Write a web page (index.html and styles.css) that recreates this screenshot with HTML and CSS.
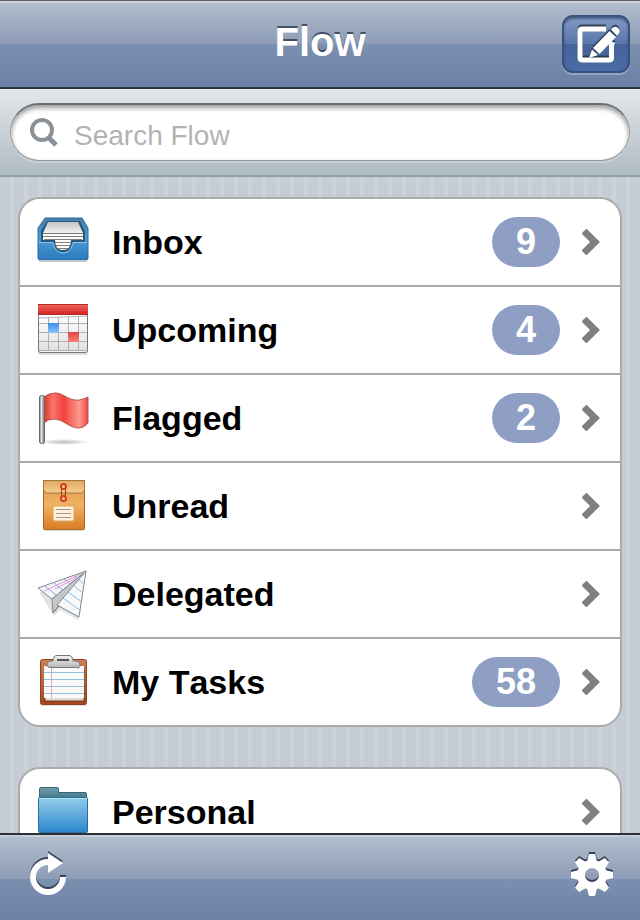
FILE: index.html
```
<!DOCTYPE html>
<html lang="en">
<head>
    <meta charset="UTF-8">
    <meta name="viewport" content="width=device-width, initial-scale=1.0">
    <title>Flow</title>
    <link rel="stylesheet" href="styles.css">
</head>
<body>
    <header class="navbar">
        <h1>Flow</h1>
        <button class="compose" aria-label="New task">
            <svg class="glyph" width="48" height="46" viewBox="0 0 48 46">
                <path d="M34 8H10.500Q8 8 8 10.500V36.500Q8 39 10.500 39H37Q39.500 39 39.500 36.500V24L41 21" fill="none" stroke="#fff" stroke-width="5"/>
                <path d="M17 37L20 28.500 26 34Z" fill="#fff"/>
                <path d="M21 27L37.500 10 44 16 27.500 33Z" fill="#fff"/>
                <path d="M39 8.500L41 6.500Q43.500 5 46 7T47 12L45 14.500Z" fill="#fff"/>
                <path d="M20.500 27.500L27 33.500M38 9.500L44.500 15.500" stroke="#33496f" stroke-width="1"/>
            </svg>
        </button>
    </header>

    <form class="search" role="search">
        <label class="search-field">
            <svg width="32" height="32" viewBox="0 0 32 32">
                <circle cx="14" cy="13" r="10" fill="none" stroke="#8b9199" stroke-width="4"/>
                <path d="M20 20L28 28" stroke="#8b9199" stroke-width="5"/>
            </svg>
            <input type="search" placeholder="Search Flow" aria-label="Search Flow">
        </label>
    </form>

    <main>
        <ul class="list">
            <li>
                <a href="#inbox">
                    <svg class="icon" viewBox="0 0 52 52">
                        <defs>
                            <linearGradient id="tray" x2="0" y2="1">
                                <stop offset="0" stop-color="#477ea9"/>
                                <stop offset=".5" stop-color="#4b9bd5"/>
                                <stop offset="1" stop-color="#2a7abd"/>
                            </linearGradient>
                            <linearGradient id="sheet" x2="0" y2="1">
                                <stop offset="0" stop-color="#c4c4c4"/>
                                <stop offset=".5" stop-color="#fff"/>
                            </linearGradient>
                        </defs>
                        <path d="M8 2H45L51 12V42Q51 44 49 44H3Q1 44 1 42V12Z" fill="url(#tray)" stroke="#2b6a9e"/>
                        <path d="M10 5H43L48 15V26H36Q34 36 26 36T16 26H4V15Z" fill="#28577b"/>
                        <path d="M11 6H41L46 17V24H34Q34 34 26 34T18 24H6V17Z" fill="url(#sheet)"/>
                        <path d="M6 17.500H46M6 20.500H46M7 23.500H45M18 26.500H34M19 29.500H33M21 32.500H31" stroke="#817d78"/>
                        <path d="M2 26.500H16Q18 37 26 37T36 26.500H50" fill="none" stroke="#8dc5ea"/>
                        <path d="M2 45H50" stroke="#c2c7cb" stroke-width="2"/>
                    </svg>
                    <span class="name">Inbox</span>
                    <span class="badge">9</span>
                    <svg class="chevron" viewBox="0 0 18 26"><path d="M2 2L13 13 2 24"/></svg>
                </a>
            </li>
            <li>
                <a href="#upcoming">
                    <svg class="icon" viewBox="0 0 52 52">
                        <defs>
                            <linearGradient id="redbar" x2="0" y2="1">
                                <stop offset="0" stop-color="#f2695e"/>
                                <stop offset="1" stop-color="#cf2020"/>
                            </linearGradient>
                            <linearGradient id="page" x2="0" y2="1">
                                <stop offset="0" stop-color="#fff"/>
                                <stop offset="1" stop-color="#e2e2e2"/>
                            </linearGradient>
                            <linearGradient id="blueday" x2="0" y2="1">
                                <stop offset="0" stop-color="#3b8ee6"/>
                                <stop offset="1" stop-color="#8ac4fb"/>
                            </linearGradient>
                            <linearGradient id="redday" x2="0" y2="1">
                                <stop offset="0" stop-color="#e04444"/>
                                <stop offset="1" stop-color="#fb8078"/>
                            </linearGradient>
                        </defs>
                        <rect x="1" y="4" width="50" height="47" rx="2" fill="#ddd"/>
                        <rect x="1.500" y="3.500" width="49" height="45" rx="2" fill="#f5f5f5" stroke="#777"/>
                        <rect x="2" y="10" width="48" height="36" fill="url(#page)"/>
                        <path d="M11.500 13V46M21.500 13V46M31.500 13V46M41.500 13V46M2 19.500H50M2 28.500H50M2 37.500H50M2 46.500H50" stroke="#b0b0b0"/>
                        <rect x="11" y="19" width="11" height="10" fill="url(#blueday)"/>
                        <rect x="31" y="28" width="11" height="10" fill="url(#redday)"/>
                        <path d="M2 14L50 12" stroke="#b5b5b5"/>
                        <rect x="1" width="50" height="11" rx="1" fill="url(#redbar)"/>
                        <path d="M1 .500H51M1 10.500H51" stroke="#b02a2a"/>
                    </svg>
                    <span class="name">Upcoming</span>
                    <span class="badge">4</span>
                    <svg class="chevron" viewBox="0 0 18 26"><path d="M2 2L13 13 2 24"/></svg>
                </a>
            </li>
            <li>
                <a href="#flagged">
                    <svg class="icon" viewBox="0 0 52 52">
                        <defs>
                            <linearGradient id="cloth">
                                <stop offset="0" stop-color="#e0332c"/>
                                <stop offset=".2" stop-color="#fb756b"/>
                                <stop offset=".45" stop-color="#f0433b"/>
                                <stop offset=".8" stop-color="#ff9a8f"/>
                                <stop offset="1" stop-color="#ea4a42"/>
                            </linearGradient>
                            <linearGradient id="pole">
                                <stop offset="0" stop-color="#777"/>
                                <stop offset=".4" stop-color="#e6e6e6"/>
                                <stop offset="1" stop-color="#666"/>
                            </linearGradient>
                            <radialGradient id="shade">
                                <stop offset="0" stop-color="#bbb"/>
                                <stop offset="1" stop-color="#bbb" stop-opacity="0"/>
                            </radialGradient>
                        </defs>
                        <ellipse cx="27" cy="50" rx="25" ry="3" fill="url(#shade)"/>
                        <path d="M7 5Q12 1 18 1C29 1 34 14 51 5V31Q47 36 42 36C32 36 26 27 17 27Q11 27 7 31Z" fill="url(#cloth)" stroke="#b6504b"/>
                        <rect x="2.500" y="3.500" width="5" height="48" rx="2" fill="url(#pole)" stroke="#666"/>
                    </svg>
                    <span class="name">Flagged</span>
                    <span class="badge">2</span>
                    <svg class="chevron" viewBox="0 0 18 26"><path d="M2 2L13 13 2 24"/></svg>
                </a>
            </li>
            <li>
                <a href="#unread">
                    <svg class="icon" viewBox="0 0 52 52">
                        <defs>
                            <linearGradient id="envelope" x2="0" y2="1">
                                <stop offset="0" stop-color="#d99743"/>
                                <stop offset=".5" stop-color="#f1b264"/>
                                <stop offset="1" stop-color="#d87d24"/>
                            </linearGradient>
                            <linearGradient id="flap" x2="0" y2="1">
                                <stop offset="0" stop-color="#dfa75c"/>
                                <stop offset="1" stop-color="#f7cf91"/>
                            </linearGradient>
                        </defs>
                        <rect x="6" y="45" width="42" height="6" rx="2" fill="#ddd"/>
                        <rect x="6.500" y=".500" width="41" height="49" rx="1" fill="url(#envelope)" stroke="#a96a2a"/>
                        <path d="M6.500 .500H47.500V10L45 13H9L6.500 10Z" fill="url(#flap)" stroke="#a8763c"/>
                        <path d="M24.500 8V18M28.500 8V18" stroke="#a03a1c" stroke-width="1"/>
                        <circle cx="26.500" cy="6.500" r="2.500" fill="#f3c9a0" stroke="#cf3f1d" stroke-width="2"/>
                        <circle cx="26.500" cy="18.500" r="2.500" fill="#f3c9a0" stroke="#cf3f1d" stroke-width="2"/>
                        <rect x="16" y="26" width="21" height="15" rx="2" fill="#fdf1dc" stroke="#dca45e"/>
                        <path d="M19 29.500H34M19 33.500H34M19 37.500H34" stroke="#a89a86"/>
                    </svg>
                    <span class="name">Unread</span>
                    <svg class="chevron" viewBox="0 0 18 26"><path d="M2 2L13 13 2 24"/></svg>
                </a>
            </li>
            <li>
                <a href="#delegated">
                    <svg class="icon" viewBox="0 0 52 52">
                        <path d="M2 24L17 48 23 42 41 52 47 20Z" fill="#e2e2e2"/>
                        <path d="M49 3L1 20 15 31Z" fill="#f4f5f7" stroke="#888"/>
                        <path d="M49 3L15 31 16 45Z" fill="#c3c8cd" stroke="#888"/>
                        <path d="M49 3L16 45 22 38Z" fill="#aeb5bb"/>
                        <path d="M49 3L20 37 42 49Z" fill="#f6f8fa" stroke="#888"/>
                        <path d="M8 18L19 27M17 15L26 22M27 11L33 16M37 8L40 11" stroke="#9c9cdc" stroke-width="1"/>
                        <path d="M7 23L48 4M18 21L41 9" stroke="#e59add" stroke-width="1"/>
                        <path d="M26 30L44 43M31 24L45 34M37 18L46 25M42 12L47 16" stroke="#86bde8" stroke-width="1"/>
                        <path d="M16 45L22 38" fill="none" stroke="#777"/>
                    </svg>
                    <span class="name">Delegated</span>
                    <svg class="chevron" viewBox="0 0 18 26"><path d="M2 2L13 13 2 24"/></svg>
                </a>
            </li>
            <li>
                <a href="#tasks">
                    <svg class="icon" viewBox="0 0 52 52">
                        <defs>
                            <linearGradient id="board" x2="0" y2="1">
                                <stop offset="0" stop-color="#c98250"/>
                                <stop offset="1" stop-color="#a6441b"/>
                            </linearGradient>
                            <linearGradient id="clip" x2="0" y2="1">
                                <stop offset="0" stop-color="#f2f2f2"/>
                                <stop offset="1" stop-color="#b5b5b5"/>
                            </linearGradient>
                        </defs>
                        <rect x="3" y="46" width="47" height="4" rx="2" fill="#dcdcdc"/>
                        <rect x="3.500" y="3.500" width="46" height="45" rx="2" fill="url(#board)" stroke="#8a4524"/>
                        <rect x="8" y="12" width="39" height="33" fill="#ddd" stroke="#74371d"/>
                        <rect x="7" y="10" width="40" height="32" fill="#fafafa"/>
                        <path d="M7 16.500H47M7 23.500H47M7 30.500H47M7 37.500H47" stroke="#8ec1df"/>
                        <path d="M14.500 11V42" stroke="#e8a2bd"/>
                        <path d="M10 9Q10 5 15 5H16Q16 -.500 20 -.500H32Q36 -.500 36 5H38Q43 5 43 9T39 11.500H14Q10 11.500 10 9Z" fill="url(#clip)" stroke="#777"/>
                        <rect x="20" y="3" width="12" height="2" fill="#555"/>
                    </svg>
                    <span class="name">My Tasks</span>
                    <span class="badge">58</span>
                    <svg class="chevron" viewBox="0 0 18 26"><path d="M2 2L13 13 2 24"/></svg>
                </a>
            </li>
        </ul>

        <ul class="list">
            <li>
                <a href="#personal">
                    <svg class="icon" viewBox="0 0 52 52">
                        <defs>
                            <linearGradient id="folder" x2="0" y2="1">
                                <stop offset="0" stop-color="#92cdea"/>
                                <stop offset="1" stop-color="#2b86cc"/>
                            </linearGradient>
                            <linearGradient id="folderback" x2="0" y2="1">
                                <stop offset="0" stop-color="#6fa0ad"/>
                                <stop offset="1" stop-color="#417486"/>
                            </linearGradient>
                        </defs>
                        <path d="M2.500 13V3Q2.500 1.500 4 1.500H20Q21.500 1.500 21.500 3V6.500H48Q49.500 6.500 49.500 8V13Z" fill="url(#folderback)" stroke="#366577"/>
                        <rect x="1.500" y="11.500" width="49" height="35" rx="1" fill="url(#folder)" stroke="#2e6f98"/>
                        <path d="M2 12.500H50" stroke="#b8e2f5"/>
                    </svg>
                    <span class="name">Personal</span>
                    <svg class="chevron" viewBox="0 0 18 26"><path d="M2 2L13 13 2 24"/></svg>
                </a>
            </li>
        </ul>
    </main>

    <footer class="toolbar">
        <button aria-label="Refresh">
            <svg class="glyph" width="52" height="52" viewBox="0 0 52 52">
                <path d="M41 25A15 15 0 1 1 26 10" fill="none" stroke="#fff" stroke-width="6"/>
                <path d="M26 1L41 11 26 21Z" fill="#fff"/>
            </svg>
        </button>
        <button aria-label="Settings">
            <svg class="glyph" width="52" height="52" viewBox="0 0 52 52">
                <defs>
                    <path id="teeth" d="M23 2H29L31 10V36L29 44H23L21 36V10Z"/>
                    <mask id="hub">
                        <rect width="52" height="52" fill="#fff"/>
                        <circle cx="26" cy="23" r="7" fill="#000"/>
                    </mask>
                </defs>
                <g fill="#fff" mask="url(#hub)">
                    <circle cx="26" cy="23" r="15"/>
                    <use href="#teeth"/>
                    <use href="#teeth" transform="rotate(45 26 23)"/>
                    <use href="#teeth" transform="rotate(90 26 23)"/>
                    <use href="#teeth" transform="rotate(135 26 23)"/>
                </g>
            </svg>
        </button>
    </footer>
</body>
</html>
```
FILE: styles.css
```
* {
    box-sizing: border-box;
}
body {
    display: flex;
    flex-direction: column;
    height: 100vh;
    margin: 0;
    font-family: "Liberation Sans", Arial, sans-serif;
    font-kerning: none;
    background-color: #c5ccd4;
    color: #000;
}
button {
    padding: 0;
    border: none;
    background: none;
    cursor: pointer;
}
svg {
    display: block;
    flex: none;
}
.glyph {
    filter: drop-shadow(0 -2px 0 rgba(40, 50, 68, 0.85));
}

/* top bar */
.navbar {
    display: grid;
    grid-template-columns: 1fr auto 1fr;
    align-items: center;
    flex: none;
    height: 89px;
    padding: 0 10px;
    border-top: 1px solid #5d5f6c;
    border-bottom: 2px solid #2d3545;
    background: linear-gradient(#b4bfcf, #8d9cb6 50%, #7b8fb0 50%, #6c81a5);
    box-shadow: inset 0 2px 0 #cdd3dd;
}
.navbar h1 {
    grid-column: 2;
    margin: 0;
    padding-bottom: 4px;
    color: #fff;
    font-size: 40px;
    line-height: 48px;
    text-shadow: 0 -2px 0 rgba(40, 50, 68, 0.75);
}
.compose {
    display: flex;
    align-items: center;
    justify-content: center;
    justify-self: end;
    width: 68px;
    height: 58px;
    border: 2px solid #38527f;
    border-radius: 11px;
    background: linear-gradient(#8299c2, #5876ac 50%, #456399 50%, #4a6ca6);
    box-shadow: inset 0 2px 2px rgba(30, 45, 80, 0.5), 0 2px 0 rgba(255, 255, 255, 0.25);
}

/* search */
.search {
    flex: none;
    height: 88px;
    padding: 14px 10px;
    border-bottom: 2px solid #919ca5;
    background: linear-gradient(#e3e7ea, #afbbc3);
}
.search-field {
    display: flex;
    align-items: center;
    gap: 14px;
    height: 58px;
    padding: 0 17px;
    border: 1px solid #8f9599;
    border-top: 2px solid #6a6d70;
    border-radius: 29px;
    background-color: #fff;
    box-shadow: inset 0 3px 5px rgba(0, 0, 0, 0.4), 0 2px 0 rgba(255, 255, 255, 0.25);
}
.search-field input {
    flex: 1;
    min-width: 0;
    padding: 6px 0 0;
    border: none;
    outline: none;
    background: none;
    font-family: inherit;
    font-size: 28px;
}
.search-field input::placeholder {
    color: #b3b3b3;
}

/* lists */
main {
    flex: 1;
    min-height: 0;
    overflow: hidden;
    padding: 20px 18px;
    background: repeating-linear-gradient(90deg, #c5ccd4 0, #c5ccd4 10px, #cbd2d8 10px, #cbd2d8 14px);
}
.list {
    margin: 0 0 40px;
    padding: 0;
    list-style: none;
    border: 2px solid #a9abad;
    border-radius: 22px;
    background-color: #fff;
}
.list li + li {
    border-top: 2px solid #a9abad;
}
.list a {
    display: flex;
    align-items: center;
    gap: 22px;
    height: 86px;
    padding: 0 20px 0 17px;
    color: inherit;
    text-decoration: none;
}
.icon {
    width: 52px;
    height: 52px;
    overflow: visible;
}
.name {
    flex: 1;
    padding-left: 1px;
    font-size: 34px;
    font-weight: bold;
}
.badge {
    padding: 0 24px;
    border-radius: 25px;
    background-color: #8e9fc3;
    color: #fff;
    font-size: 36px;
    font-weight: bold;
    line-height: 50px;
}
.chevron {
    width: 18px;
    height: 26px;
}
.chevron path {
    fill: none;
    stroke: #808080;
    stroke-width: 7;
}

/* bottom bar */
.toolbar {
    display: flex;
    align-items: center;
    justify-content: space-between;
    flex: none;
    height: 87px;
    padding: 0 22px;
    border-top: 2px solid #2b2f36;
    background: linear-gradient(#b4bfcf, #8d9cb6 52%, #7b8fb0 52%, #6c81a5);
    box-shadow: inset 0 2px 0 #c6ced9;
}
```
